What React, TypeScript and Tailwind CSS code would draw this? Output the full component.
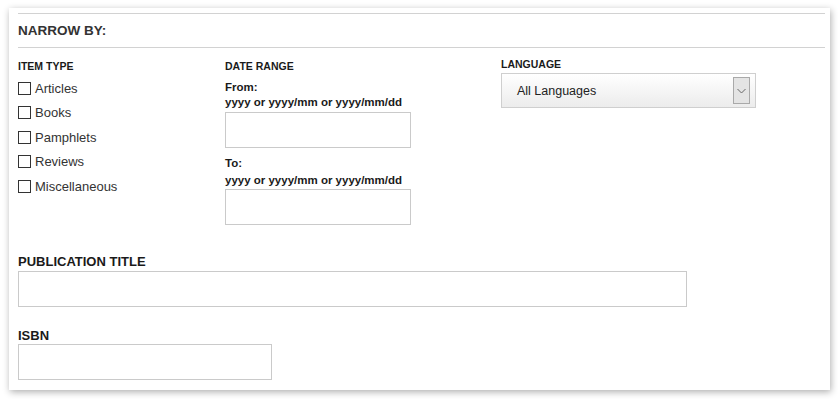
import { useState } from 'react';

const items = ['Articles', 'Books', 'Pamphlets', 'Reviews', 'Miscellaneous'];

export default function App() {
    const [checked, setChecked] = useState<string[]>([]);

    const toggle = (name: string) => {
        setChecked(checked.includes(name) ? checked.filter(c => c !== name) : [...checked, name]);
    };

    return (
        <div className="w-[838px] h-[399px] bg-white pt-2 pl-[9px] font-['Liberation_Sans',Arial,sans-serif]">
            <div className="w-[821px] h-[382px] bg-white shadow-[1px_2px_7px_rgba(0,0,0,0.32)] pl-[9px] pr-[5px] pt-[5px]">
                {/* Header */}
                <div className="h-[35px] border-t border-b border-[#d2d2d2] flex items-center">
                    <h2 className="text-[13.5px] font-bold text-[#333] leading-[15px]">NARROW BY:</h2>
                </div>

                <div className="flex mt-[12px]">
                    {/* Item type */}
                    <div className="w-[207px]">
                        <div className="text-[10.5px] font-bold text-[#1a1a1a] leading-[12px]">ITEM TYPE</div>
                        <div className="mt-[4px]">
                            {items.map(item => (
                                <label key={item} className="h-[24.5px] flex items-center cursor-pointer" onClick={() => toggle(item)}>
                                    <span className="w-[13px] h-[13px] border border-[#333] bg-white flex items-center justify-center text-[10px] leading-none">
                                        {checked.includes(item) ? '✓' : ''}
                                    </span>
                                    <span className="ml-[4px] text-[13px] leading-[15px] text-[#333]">{item}</span>
                                </label>
                            ))}
                        </div>
                    </div>

                    {/* Date range */}
                    <div className="w-[276px]">
                        <div className="text-[10.5px] font-bold text-[#1a1a1a] leading-[12px]">DATE RANGE</div>
                        <div className="mt-[8px] text-[11.5px] font-bold text-[#1a1a1a] leading-[15px]">From:</div>
                        <div className="text-[11.5px] font-bold text-[#1a1a1a] leading-[15px]">yyyy or yyyy/mm or yyyy/mm/dd</div>
                        <input type="text" className="mt-[2px] block w-[186px] h-[36px] border border-[#cacaca] bg-white outline-none px-2 text-[13px]" />
                        <div className="mt-[8px] text-[11.5px] font-bold text-[#1a1a1a] leading-[15px]">To:</div>
                        <div className="mt-[2px] text-[11.5px] font-bold text-[#1a1a1a] leading-[15px]">yyyy or yyyy/mm or yyyy/mm/dd</div>
                        <input type="text" className="mt-[1px] block w-[186px] h-[36px] border border-[#cacaca] bg-white outline-none px-2 text-[13px]" />
                    </div>

                    {/* Language */}
                    <div className="-mt-[2px]">
                        <div className="text-[10.5px] font-bold text-[#1a1a1a] leading-[12px]">LANGUAGE</div>
                        <div className="mt-[3px] w-[255px] h-[35px] border border-[#cfcfcf] bg-gradient-to-b from-white to-[#ececec] flex items-center justify-between pl-[15px] pr-[5px]">
                            <span className="text-[12.5px] text-[#222] leading-[15px] mt-[1px]">All Languages</span>
                            <span className="w-[17px] h-[27px] border border-[#a9a9a9] bg-[#e4e4e4] flex items-center justify-center">
                                <svg width="9" height="6" viewBox="0 0 9 6" fill="none">
                                    <path d="M0.5 1 L4.5 5 L8.5 1" stroke="#666" strokeWidth="1" />
                                </svg>
                            </span>
                        </div>
                    </div>
                </div>

                {/* Publication title */}
                <div className="mt-[29px] text-[13px] font-bold text-[#1a1a1a] leading-[15px]">PUBLICATION TITLE</div>
                <input type="text" className="mt-[2px] block w-[669px] h-[36px] border border-[#cacaca] bg-white outline-none px-2 text-[13px]" />

                {/* ISBN */}
                <div className="mt-[21px] text-[13px] font-bold text-[#1a1a1a] leading-[15px]">ISBN</div>
                <input type="text" className="mt-[1px] block w-[254px] h-[36px] border border-[#cacaca] bg-white outline-none px-2 text-[13px]" />
            </div>
        </div>
    );
}
